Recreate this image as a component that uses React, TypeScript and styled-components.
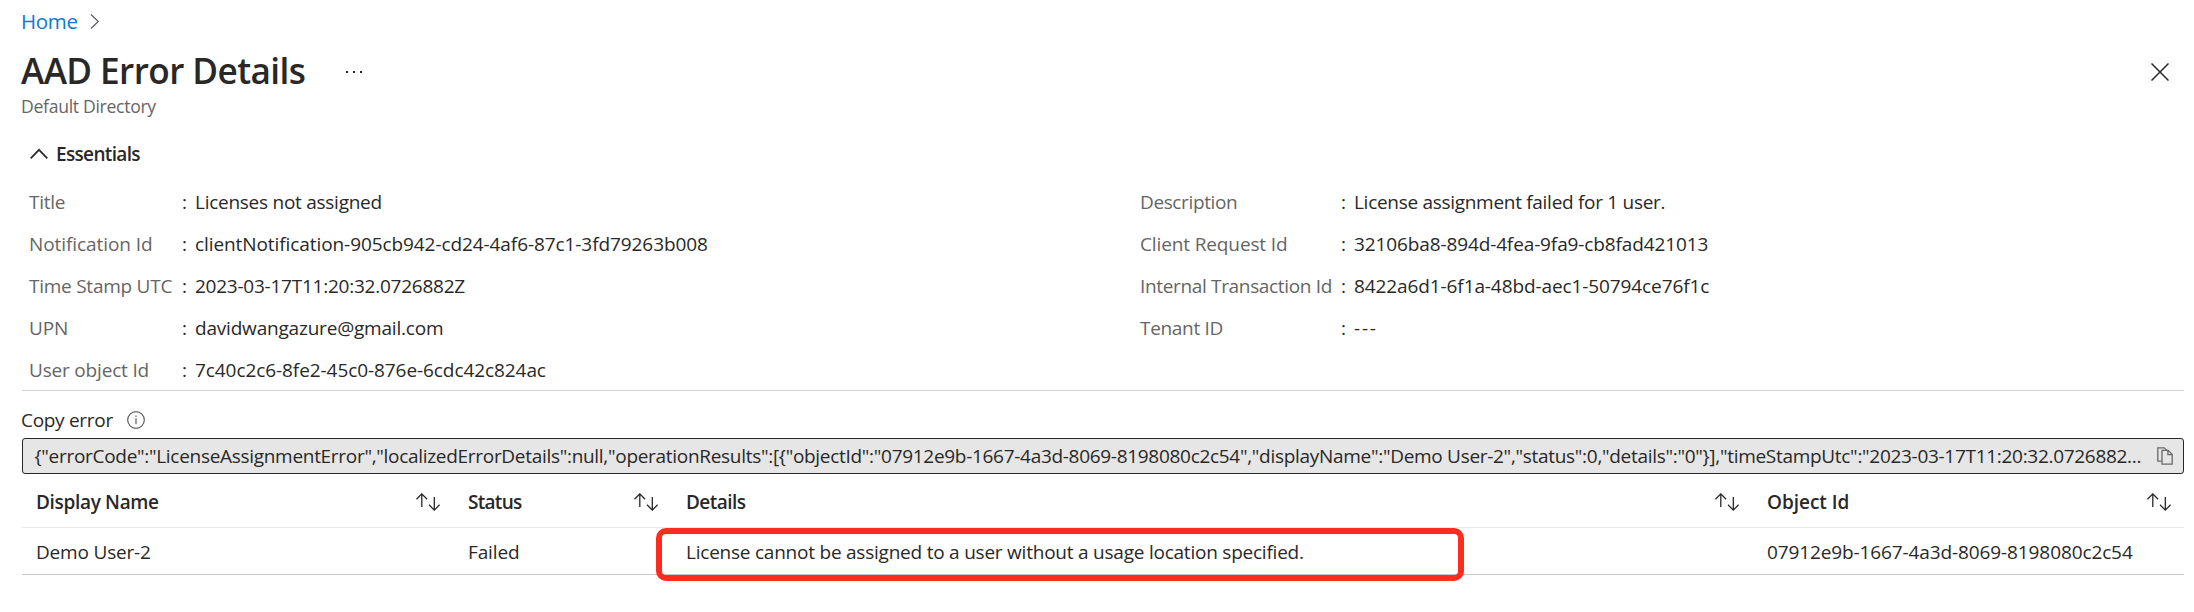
import React from 'react';
import styled, { createGlobalStyle } from 'styled-components';

const GlobalStyle = createGlobalStyle`
  * { box-sizing: border-box; }
  body {
    margin: 0;
    background: #fff;
    color: #292827;
    font-family: "Open Sans", "Noto Sans", sans-serif;
    font-size: 19px;
  }
`;

const Text = styled.span<{ $tracking?: number }>`
  letter-spacing: ${(p) => p.$tracking ?? 0}px;
  white-space: pre;
`;

const Page = styled.main`
  display: flex;
  flex-direction: column;
  height: 612px;
  padding: 7px 10px 0 21px;
  overflow: hidden;
`;

const Breadcrumb = styled.nav`
  display: flex;
  align-items: center;
  gap: 12px;
  height: 28px;
  font-size: 20.5px;
  line-height: 28px;
`;

const HomeLink = styled(Text)`
  color: #1079d4;
`;

const TitleBar = styled.header`
  display: flex;
  align-items: center;
  height: 48px;
  margin-top: 11px;
  padding: 0 15px 0 0;
`;

const Title = styled.h1`
  margin: 0;
  font-size: 35.2px;
  font-weight: 600;
  line-height: 48px;
  letter-spacing: -0.6px;
`;

const IconButton = styled.button<{ $push?: boolean }>`
  display: flex;
  margin: 4px 0 0 ${(p) => (p.$push ? 'auto' : '40px')};
  padding: 0;
  border: 0;
  background: none;
  color: #292827;
`;

const Subtitle = styled.div`
  height: 24px;
  font-size: 17.6px;
  line-height: 24px;
  color: #666564;
`;

const EssentialsToggle = styled.div`
  display: flex;
  align-items: center;
  gap: 8px;
  height: 30px;
  margin-top: 21px;
  padding-left: 9px;
  font-weight: 600;
  line-height: 30px;
`;

const Essentials = styled.section`
  display: grid;
  grid-template-columns: 1111px 1fr;
  height: 210px;
  margin: 12px 0 0 1px;
  padding-left: 7px;
  border-bottom: 1px solid #d2d2d2;
`;

const PropertyList = styled.dl<{ $labelWidth: number }>`
  display: grid;
  grid-template-columns: ${(p) => p.$labelWidth}px 13px 1fr;
  grid-auto-rows: 42px;
  align-content: start;
  height: 209px;
  margin: 0;
  line-height: 42px;
`;

const Label = styled.dt`
  color: #666564;
`;

const Value = styled.dd`
  margin: 0;
`;

const FieldLabel = styled.div`
  display: flex;
  align-items: center;
  gap: 14px;
  height: 30px;
  margin-top: 14px;
  line-height: 30px;
`;

const CopyField = styled.div`
  display: flex;
  align-items: center;
  justify-content: space-between;
  height: 36px;
  margin: 3px 0 0 1px;
  padding: 0 10px 0 11.5px;
  border: 1px solid #292827;
  border-radius: 3px;
  background: #e6e6e6;
  line-height: 34px;
`;

const Table = styled.div`
  display: flex;
  flex-direction: column;
  margin-left: 1px;
`;

const TableRow = styled.div<{ $head?: boolean }>`
  display: grid;
  grid-template-columns: 431px 218px 1081px 1fr;
  height: ${(p) => (p.$head ? 54 : 47)}px;
  border-bottom: 1px solid ${(p) => (p.$head ? '#eaeaea' : '#c8c8c8')};
  font-weight: ${(p) => (p.$head ? 600 : 400)};
`;

const Cell = styled.div`
  position: relative;
  display: flex;
  align-items: center;
  justify-content: space-between;
  padding: 2px 13px 0 15px;

  &:first-child {
    padding-left: 14px;
  }
`;

const Highlight = styled.div`
  position: absolute;
  top: 0;
  left: -15px;
  width: 808px;
  height: 53px;
  border: 6px solid #fe2b1f;
  border-radius: 10px;
`;

const ChevronRight = () => (
  <svg width="10" height="17" viewBox="0 0 10 17" fill="none" stroke="#605e5c" strokeWidth="1.2">
    <path d="M1 1.5 8.3 8.5 1 15.5" />
  </svg>
);

const ChevronUp = () => (
  <svg width="18" height="12" viewBox="0 0 18 12" fill="none" stroke="#292827" strokeWidth="1.7">
    <path d="M.7 10.3 9 1.8 17.3 10.3" />
  </svg>
);

const Ellipsis = () => (
  <svg width="20" height="4" viewBox="0 0 20 4" fill="#292827">
    <rect x="1" y="1" width="2" height="2" />
    <rect x="8" y="1" width="2" height="2" />
    <rect x="15" y="1" width="2" height="2" />
  </svg>
);

const CloseIcon = () => (
  <svg width="18" height="18" viewBox="0 0 18 18" fill="none" stroke="#292827" strokeWidth="1.5">
    <path d="M.5.5 17.5 17.5M17.5.5.5 17.5" />
  </svg>
);

const InfoIcon = () => (
  <svg width="18" height="18" viewBox="0 0 18 18" fill="none" stroke="#605e5c" strokeWidth="1.2">
    <circle cx="9" cy="9" r="8.3" />
    <path d="M9 7.2V13.3M9 4.6V6" />
  </svg>
);

const CopyIcon = () => (
  <svg width="16" height="18" viewBox="0 0 16 18" fill="none" stroke="#6b6967" strokeWidth="1.3">
    <path d="M4.5 14.2H.8V.8H7.3L9.6 3.1" />
    <path d="M5 3.4H11.2L15.2 7.4V17.2H5ZM10.9 3.6V7.7H15" />
  </svg>
);

const SortIcon = () => (
  <svg width="24" height="18" viewBox="0 0 24 18" fill="none" stroke="#292827" strokeWidth="1.3">
    <path d="M5.8 14V1M.5 6.2 5.8.9 11.1 6.2" />
    <path d="M18.3 4V17M13 11.8 18.3 17.1 23.6 11.8" />
  </svg>
);

interface Property {
  label: string;
  labelTracking: number;
  value: string;
  tracking: number;
}

const leftProperties: Property[] = [
  { label: 'Title', labelTracking: -0.28, value: 'Licenses not assigned', tracking: -0.262 },
  { label: 'Notification Id', labelTracking: -0.075, value: 'clientNotification-905cb942-cd24-4af6-87c1-3fd79263b008', tracking: -0.082 },
  { label: 'Time Stamp UTC', labelTracking: -0.25, value: '2023-03-17T11:20:32.0726882Z', tracking: -0.24 },
  { label: 'UPN', labelTracking: -0.14, value: 'davidwangazure@gmail.com', tracking: -0.196 },
  { label: 'User object Id', labelTracking: -0.185, value: '7c40c2c6-8fe2-45c0-876e-6cdc42c824ac', tracking: -0.075 },
];

const rightProperties: Property[] = [
  { label: 'Description', labelTracking: -0.38, value: 'License assignment failed for 1 user.', tracking: -0.294 },
  { label: 'Client Request Id', labelTracking: -0.125, value: '32106ba8-894d-4fea-9fa9-cb8fad421013', tracking: -0.12 },
  { label: 'Internal Transaction Id', labelTracking: -0.34, value: '8422a6d1-6f1a-48bd-aec1-50794ce76f1c', tracking: -0.1 },
  { label: 'Tenant ID', labelTracking: -0.314, value: '---', tracking: 1.8 },
];

const columns = [
  { name: 'Display Name', tracking: -0.33 },
  { name: 'Status', tracking: -0.713 },
  { name: 'Details', tracking: -0.551 },
  { name: 'Object Id', tracking: -0.026 },
];

const errorJson =
  '{"errorCode":"LicenseAssignmentError","localizedErrorDetails":null,"operationResults":[{"objectId":"07912e9b-1667-4a3d-8069-8198080c2c54","displayName":"Demo User-2","status":0,"details":"0"}],"timeStampUtc":"2023-03-17T11:20:32.0726882...';

function Properties({ items, labelWidth }: { items: Property[]; labelWidth: number }) {
  return (
    <PropertyList $labelWidth={labelWidth}>
      {items.map((item) => (
        <React.Fragment key={item.label}>
          <Label>
            <Text $tracking={item.labelTracking}>{item.label}</Text>
          </Label>
          <span>:</span>
          <Value>
            <Text $tracking={item.tracking}>{item.value}</Text>
          </Value>
        </React.Fragment>
      ))}
    </PropertyList>
  );
}

export default function App() {
  return (
    <Page>
      <GlobalStyle />
      <Breadcrumb>
        <HomeLink $tracking={-0.308}>Home</HomeLink>
        <ChevronRight />
      </Breadcrumb>
      <TitleBar>
        <Title>AAD Error Details</Title>
        <IconButton aria-label="More">
          <Ellipsis />
        </IconButton>
        <IconButton $push aria-label="Close">
          <CloseIcon />
        </IconButton>
      </TitleBar>
      <Subtitle>
        <Text $tracking={-0.3}>Default Directory</Text>
      </Subtitle>
      <EssentialsToggle>
        <ChevronUp />
        <Text $tracking={-0.66}>Essentials</Text>
      </EssentialsToggle>
      <Essentials>
        <Properties items={leftProperties} labelWidth={153} />
        <Properties items={rightProperties} labelWidth={201} />
      </Essentials>
      <FieldLabel>
        <Text $tracking={-0.3}>Copy error</Text>
        <InfoIcon />
      </FieldLabel>
      <CopyField>
        <Text $tracking={-0.298}>{errorJson}</Text>
        <CopyIcon />
      </CopyField>
      <Table>
        <TableRow $head>
          {columns.map((column) => (
            <Cell key={column.name}>
              <Text $tracking={column.tracking}>{column.name}</Text>
              <SortIcon />
            </Cell>
          ))}
        </TableRow>
        <TableRow>
          <Cell>
            <Text $tracking={-0.186}>Demo User-2</Text>
          </Cell>
          <Cell>
            <Text $tracking={-0.125}>Failed</Text>
          </Cell>
          <Cell>
            <Text $tracking={-0.227}>License cannot be assigned to a user without a usage location specified.</Text>
            <Highlight />
          </Cell>
          <Cell>
            <Text $tracking={-0.11}>07912e9b-1667-4a3d-8069-8198080c2c54</Text>
          </Cell>
        </TableRow>
      </Table>
    </Page>
  );
}
